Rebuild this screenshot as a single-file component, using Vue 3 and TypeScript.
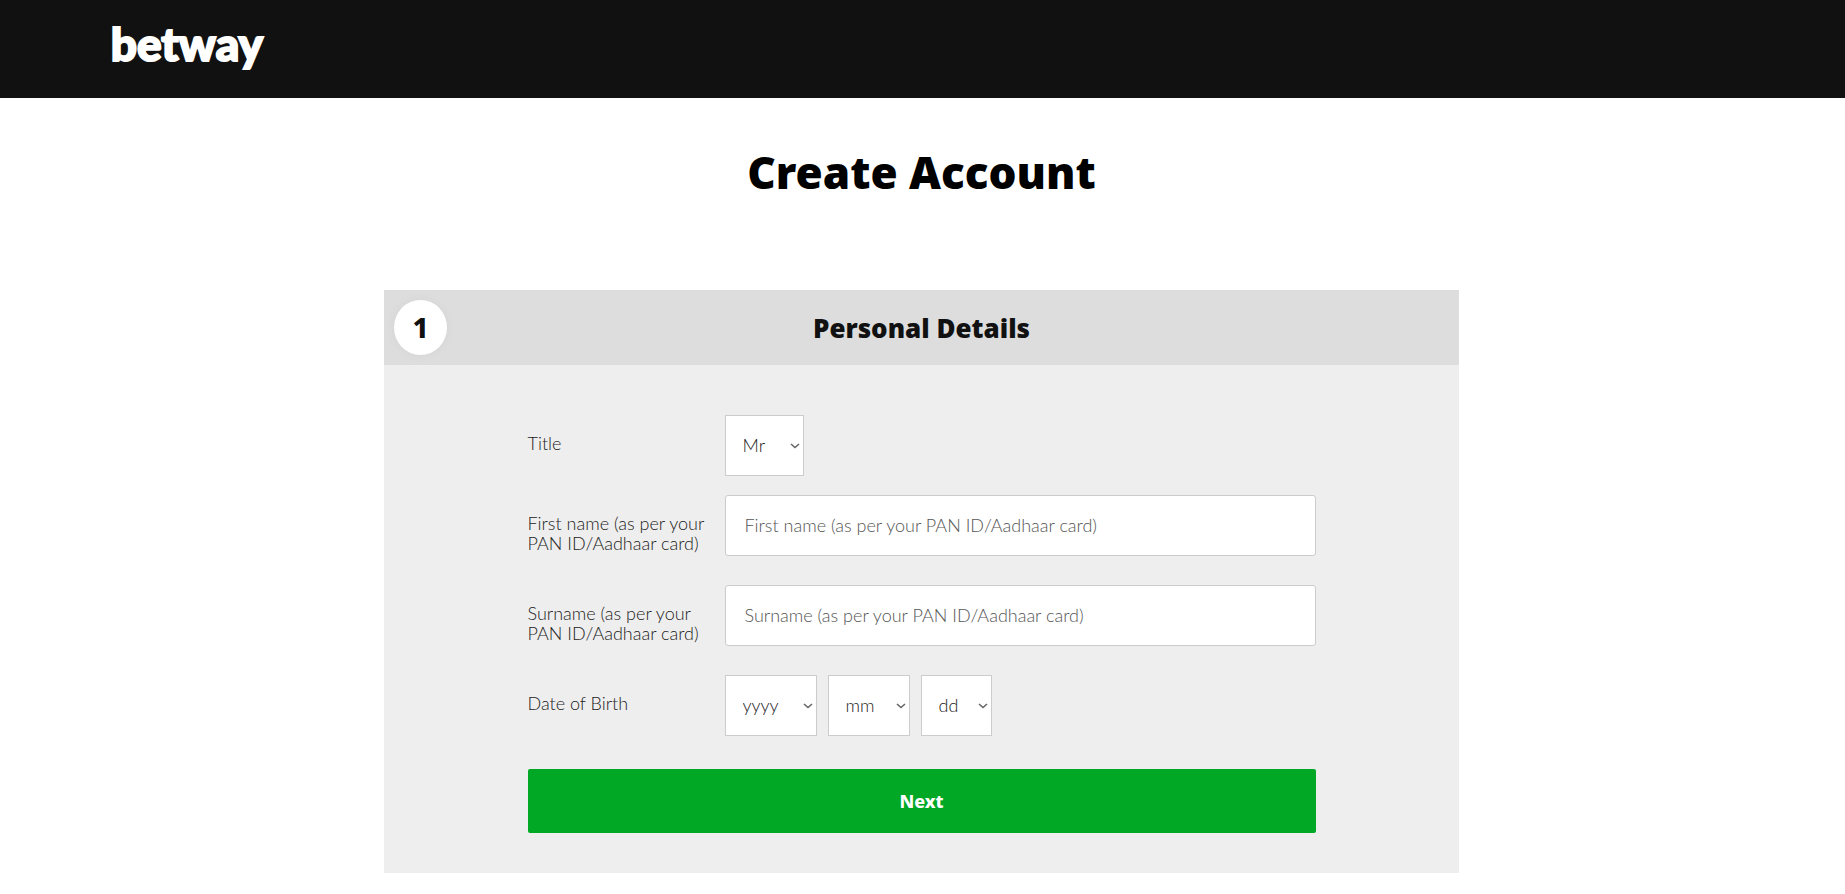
<script setup lang="ts">
import { ref } from 'vue'

interface NameField {
  id: string
  label: string
}

interface DatePart {
  id: string
  hint: string
  name: string
  options: string[]
}

const range = (from: number, to: number): string[] =>
  Array.from({ length: to - from + 1 }, (_, i) => String(from + i).padStart(2, '0'))

const titles = ['Mr', 'Ms', 'Mrs']
const title = ref('Mr')

const nameFields: NameField[] = [
  { id: 'first-name', label: 'First name (as per your PAN ID/Aadhaar card)' },
  { id: 'surname', label: 'Surname (as per your PAN ID/Aadhaar card)' },
]
const names = ref<Record<string, string>>({ 'first-name': '', surname: '' })

const dateParts: DatePart[] = [
  { id: 'year', hint: 'yyyy', name: 'Year', options: range(1930, 2005).reverse() },
  { id: 'month', hint: 'mm', name: 'Month', options: range(1, 12) },
  { id: 'day', hint: 'dd', name: 'Day', options: range(1, 31) },
]
const birth = ref<Record<string, string>>({ year: '', month: '', day: '' })
</script>

<template>
  <div class="page">
    <header class="topbar">
      <a class="logo" href="#">betway</a>
    </header>

    <main class="content">
      <h1 class="heading">Create Account</h1>

      <section class="card">
        <div class="card-head">
          <span class="step">1</span>
          <h2 class="card-title">Personal Details</h2>
        </div>

        <form class="form" @submit.prevent>
          <div class="row row-title">
            <label class="label" for="title">Title</label>
            <div class="field">
              <select id="title" v-model="title" class="control select title">
                <option v-for="t in titles" :key="t" :value="t">{{ t }}</option>
              </select>
            </div>
          </div>

          <div v-for="f in nameFields" :key="f.id" class="row">
            <label class="label" :for="f.id">{{ f.label }}</label>
            <div class="field">
              <input :id="f.id" v-model="names[f.id]" class="control input" type="text" :placeholder="f.label" />
            </div>
          </div>

          <div class="row row-birth">
            <label class="label" for="year">Date of Birth</label>
            <div class="field">
              <select
                v-for="p in dateParts"
                :id="p.id"
                :key="p.id"
                v-model="birth[p.id]"
                class="control select"
                :class="p.id"
                :aria-label="p.name"
              >
                <option value="">{{ p.hint }}</option>
                <option v-for="o in p.options" :key="o" :value="o">{{ o }}</option>
              </select>
            </div>
          </div>

          <button class="next" type="submit">Next</button>
        </form>
      </section>
    </main>
  </div>
</template>

<style>
body {
  margin: 0;
  background: #fff;
}
</style>

<style scoped>
.page {
  font-family: Lato, "Noto Sans", sans-serif;
  font-size: 18px;
  font-weight: 300;
  line-height: 20px;
  color: #222;
}

.topbar {
  box-sizing: border-box;
  height: 98px;
  padding: 16px 6%;
  background: #111;
}

.logo {
  font-size: 46px;
  font-weight: 900;
  line-height: 56px;
  color: #fff;
  text-decoration: none;
  -webkit-text-stroke: 2px #fff;
}

.content {
  padding: 42px 18px 20px 16px;
}

.heading {
  margin: 0 0 86px;
  font-family: "Noto Sans", sans-serif;
  font-size: 44px;
  font-weight: 900;
  line-height: 64px;
  text-align: center;
  color: #000;
}

.card {
  max-width: 1075px;
  margin: 0 auto;
  background: #eee;
}

.card-head {
  display: grid;
  grid-template-columns: 53px 1fr 53px;
  align-items: center;
  padding: 10px;
  background: #ddd;
  font-family: "Noto Sans", sans-serif;
  color: #111;
}

.step {
  border-radius: 50%;
  background: #fff;
  box-shadow: 0 0 12px rgba(0, 0, 0, 0.04);
  font-size: 28px;
  font-weight: 800;
  line-height: 55px;
  text-align: center;
}

.card-title {
  margin: 0;
  font-size: 26px;
  font-weight: 900;
  line-height: 40px;
  text-align: center;
}

.form {
  max-width: 788px;
  margin: 0 auto;
  padding: 50px 16px 40px;
}

.row {
  display: grid;
  grid-template-columns: 1fr 3fr;
  margin-bottom: 29px;
}

.row-title {
  margin-bottom: 19px;
}

.row-birth {
  margin-bottom: 33px;
}

.label {
  padding: 18px 16px 0 0;
}

.field {
  display: flex;
  gap: 11px;
}

.control {
  box-sizing: border-box;
  height: 61px;
  border: 1px solid #ccc;
  background-color: #fff;
  font: inherit;
  color: #222;
}

.input {
  width: 100%;
  padding: 0 19px 2px;
  border-radius: 3px;
}

.input::placeholder {
  color: #555;
}

.select {
  appearance: none;
  padding: 0 16px 2px 17px;
  border-radius: 0;
  background-image: url("data:image/svg+xml,%3Csvg xmlns='http://www.w3.org/2000/svg' width='10' height='6' viewBox='0 0 10 6'%3E%3Cpath d='M1 1l4 3.5L9 1' fill='none' stroke='%23666' stroke-width='1.6'/%3E%3C/svg%3E");
  background-repeat: no-repeat;
  background-position: right 3px center;
}

.title {
  width: 79px;
}

.year {
  width: 92px;
}

.month {
  width: 82px;
}

.day {
  width: 71px;
}

.next {
  display: block;
  width: 100%;
  height: 64px;
  border: 0;
  border-radius: 2px;
  background: #00a826;
  font-family: "Noto Sans", sans-serif;
  font-size: 18px;
  font-weight: 800;
  color: #fff;
  cursor: pointer;
}
</style>
